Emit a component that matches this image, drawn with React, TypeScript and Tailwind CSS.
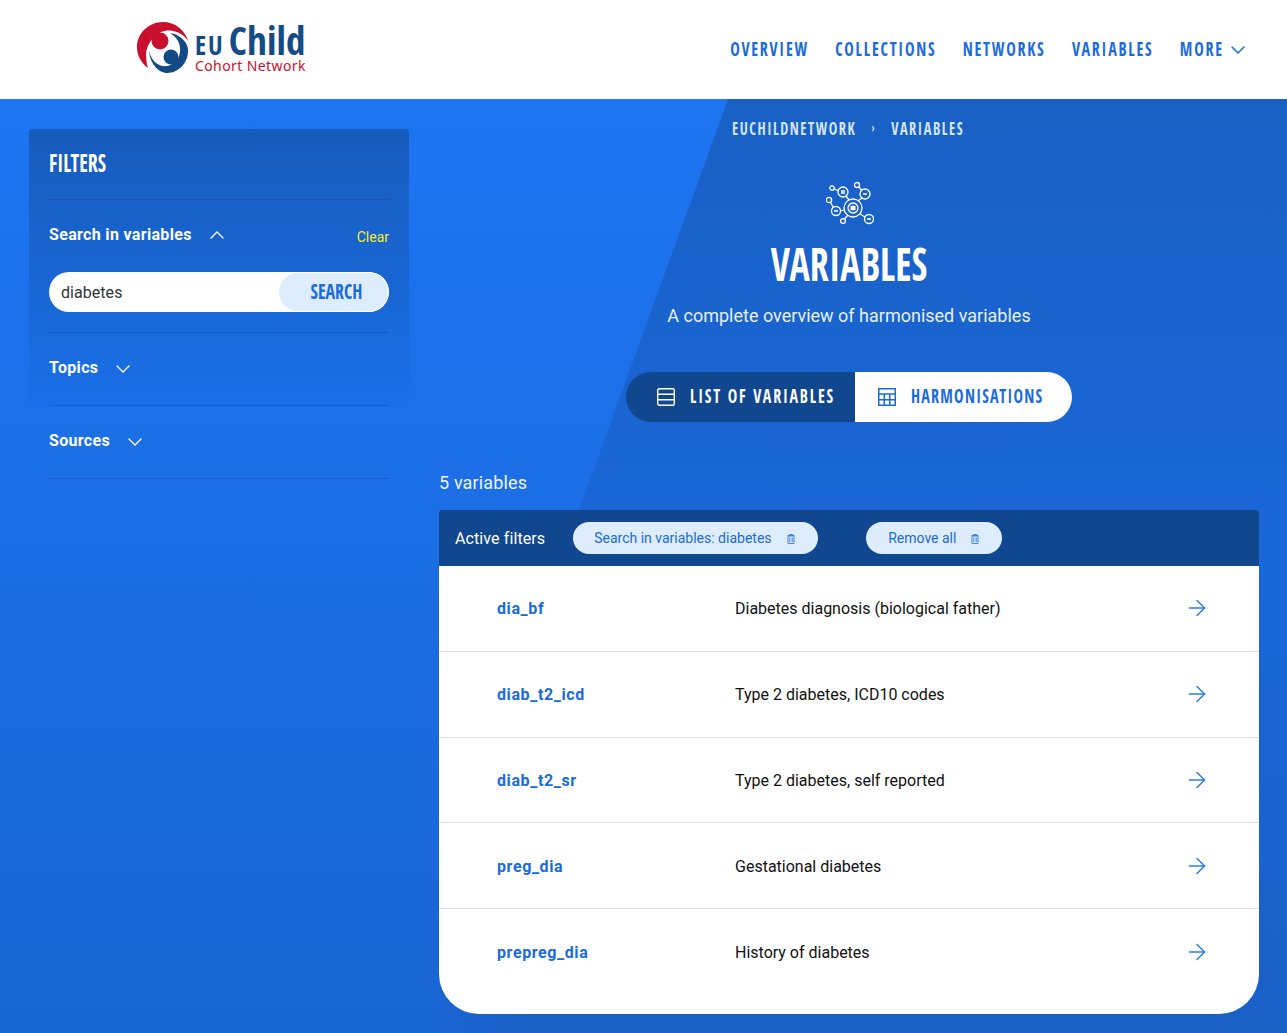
import React from 'react';
import { ArrowRight, ChevronDown, ChevronUp } from 'lucide-react';

const BODY = "font-['Roboto',sans-serif]";
const DISPLAY = "font-['Open_Sans_Condensed','Open_Sans',sans-serif]";

const NAV_ITEMS = ['OVERVIEW', 'COLLECTIONS', 'NETWORKS', 'VARIABLES', 'MORE'];

const ROWS = [
  { name: 'dia_bf', label: 'Diabetes diagnosis (biological father)', height: 'h-[86px]' },
  { name: 'diab_t2_icd', label: 'Type 2 diabetes, ICD10 codes', height: 'h-[86px]' },
  { name: 'diab_t2_sr', label: 'Type 2 diabetes, self reported', height: 'h-[85px] pt-[1px]' },
  { name: 'preg_dia', label: 'Gestational diabetes', height: 'h-[86px] pt-[2px]' },
  { name: 'prepreg_dia', label: 'History of diabetes', height: 'h-[105px] pb-[18px]' },
];

const Logo: React.FC = () => (
  <div className="flex items-center gap-[6px]">
    <svg width="53" height="52" viewBox="0 0 53 52" aria-label="EU Child logo" className="shrink-0">
      <path d="M11 46 C3 40 0 32 0 25 C0 11 12 0 26 0 C38 0 48 8 51 19 C47 13 42 10 36 9 C31 8 27 9 24 10 C16 14 10 22 9 32 C9 38 10 43 11 46 Z" fill="#c8102e" />
      <circle cx="23" cy="19" r="8.500" fill="#c8102e" />
      <path d="M12 29 C13 42 22 51 30 51 C42 51 52 40 51 27 C50 19 42 12 33 11 C40 15 44 22 43 30 C42 40 33 45 26 44 C19 43 14 37 12 29 Z" fill="#144a85" />
      <circle cx="34" cy="35" r="7.500" fill="#144a85" />
    </svg>
    <div className="flex flex-col">
      <div className={`${DISPLAY} flex items-baseline gap-[4px] h-[32px] ml-[-1px] font-bold text-[#144a85]`}>
        <span className="block text-[26px] leading-[32px] tracking-[2px]">EU</span>
        <span className="block text-[39px] leading-[32px] tracking-[0.200px]">Child</span>
      </div>
      <span className="block text-[14px] leading-[14px] tracking-[0.400px] text-[#c8102e] font-['Noto_Sans',sans-serif] mt-[3px] ml-[-1px] whitespace-nowrap">Cohort Network</span>
    </div>
  </div>
);

const NetworkIcon: React.FC = () => (
  <svg width="48" height="44" viewBox="0 0 48 44" fill="none" stroke="white" strokeWidth="1.300">
    <circle cx="27" cy="27" r="9" />
    <circle cx="27" cy="27" r="5" />
    <path d="M24.500 25.500h5M24.500 27h5M24.500 28.500h5" />
    <circle cx="17" cy="11" r="5" />
    <path d="M15 10h4M15 12h4" />
    <circle cx="6" cy="7" r="2.200" />
    <path d="M8 8l4 1.500M20 15l3 4" />
    <circle cx="39" cy="13" r="5" />
    <path d="M37 13h4M36 17l-4 3" />
    <circle cx="31" cy="4" r="2.500" />
    <path d="M33 6l3 3.500" />
    <circle cx="43" cy="38" r="4.500" />
    <path d="M41 38h4M34 33l5 3" />
    <circle cx="10" cy="30" r="4.500" />
    <path d="M8 30h4M14.500 30l3.500-1" />
    <circle cx="3" cy="19" r="2.600" />
    <path d="M4.500 21.500l3 5" />
    <circle cx="17" cy="40" r="2.400" />
    <path d="M18.500 38l3.500-4" />
  </svg>
);

const ListIcon: React.FC = () => (
  <svg width="18" height="18" viewBox="0 0 18 18" fill="none" stroke="currentColor" strokeWidth="1.400" className="shrink-0">
    <rect x="0.700" y="0.700" width="16.600" height="16.600" rx="1.500" />
    <path d="M1 6.300h16M1 11.700h16" />
  </svg>
);

const TableIcon: React.FC = () => (
  <svg width="18" height="18" viewBox="0 0 18 18" fill="none" stroke="currentColor" strokeWidth="1.500" className="shrink-0">
    <rect x="0.750" y="0.750" width="16.500" height="16.500" />
    <path d="M1 6h16M1 11.700h16M6.300 6v11M11.700 6v11" />
  </svg>
);

const TrashIcon: React.FC = () => (
  <svg width="8" height="10" viewBox="0 0 8 10" fill="none" stroke="#2f7be6" strokeWidth="0.900" className="shrink-0">
    <path d="M0.500 1.500h7M2.500 1.300V0.500h3v0.800" />
    <path d="M1 2h6v7.500H1z" />
    <path d="M2.800 3.500v4.500M5.200 3.500v4.500" />
  </svg>
);

const FilterSection: React.FC<{ title: string; open?: boolean; children?: React.ReactNode; action?: string; className: string }> = ({
  title,
  open,
  children,
  action,
  className,
}) => (
  <div className={`border-b border-[#0b2f6b]/25 ${className}`}>
    <div className="flex items-center gap-[13px] h-[20px]">
      <span className="text-[16px] leading-[20px] font-bold text-white tracking-[0.330px]">{title}</span>
      {open ? <ChevronUp size={24} className="text-white" strokeWidth={1.400} /> : <ChevronDown size={24} className="text-white mt-[2px]" strokeWidth={1.400} />}
      {action && <span className="ml-auto text-[14px] leading-[20px] text-[#f5f01e] mt-[4px]">{action}</span>}
    </div>
    {children}
  </div>
);

const App: React.FC = () => (
  <div className={`${BODY} w-full h-[1033px] overflow-hidden bg-white`}>
    <header className="h-[99px] flex items-center justify-between pl-[137px] pr-[37px]">
      <div className="mt-[-3px]">
        <Logo />
      </div>
      <div className="flex items-center gap-[2px] text-[#1a6bdc]">
        {/* the reference face is much narrower than anything installed */}
        <nav className={`${DISPLAY} flex items-center gap-[33px] text-[20px] font-bold tracking-[2.200px] scale-x-[0.8] origin-right mt-[-2px]`}>
          {NAV_ITEMS.map((item) => (
            <a key={item}>{item}</a>
          ))}
        </nav>
        <ChevronDown size={24} strokeWidth={1.500} />
      </div>
    </header>

    <main className="relative h-[934px] flex bg-gradient-to-b from-[#1d75f2] to-[#1965d3]">
      {/* darker diagonal shape behind the content */}
      <div className="absolute inset-0 bg-gradient-to-b from-[#1960c4] via-[#1a67d9] to-[#1a5fc4] [clip-path:polygon(728px_0,100%_0,100%_100%,440px_100%,440px_411px,579px_411px)]" />
      <div className="absolute bottom-0 left-[440px] w-[90px] h-[40px] bg-gradient-to-r from-[#1965d3] to-transparent" />

      <aside className="relative w-[439px] shrink-0 pt-[30px] pl-[29px] pr-[30px]">
        <div className="relative">
          <div className="absolute top-0 left-0 right-0 h-[276px] rounded-[4px] bg-gradient-to-b from-[#175bbb] to-[#1a6fe8]" />
          <div className="relative px-[20px]">
            <div className="border-b border-[#0b2f6b]/25 h-[71px] flex items-center">
              <span className={`${DISPLAY} text-[25px] font-bold text-white scale-x-[0.8] origin-left mt-[-3px]`}>FILTERS</span>
            </div>
            <FilterSection title="Search in variables" open action="Clear" className="h-[133px] pt-[25px]">
              <div className="mt-[27px] h-[40px] rounded-full bg-white flex items-center justify-between overflow-hidden">
                <span className="pl-[12px] pt-[1px] text-[16px] text-[#333] tracking-[0.050px]">diabetes</span>
                <button className="w-[111px] h-[40px] pl-[6px] rounded-full bg-[#deedfd] border border-white flex items-center justify-center">
                  <span className={`${DISPLAY} block text-[#1a6bdc] font-bold text-[21px] scale-x-[0.85]`}>SEARCH</span>
                </button>
              </div>
            </FilterSection>
            <FilterSection title="Topics" className="h-[73px] pt-[25px]" />
            <FilterSection title="Sources" className="h-[73px] pt-[25px]" />
          </div>
        </div>
      </aside>

      <section className="relative w-[820px] flex flex-col">
        <div className={`${DISPLAY} mt-[20px] ml-[293px] flex items-center h-[18px] text-[18px] font-bold tracking-[1.900px] text-[#d5e6fb] whitespace-nowrap scale-x-[0.8] origin-left`}>
          <span>EUCHILDNETWORK</span>
          <span className="mx-[19px] text-[12px] font-normal">›</span>
          <span>VARIABLES</span>
        </div>
        <div className="mt-[44px] flex justify-center h-[44px] pl-[2px]">
          <NetworkIcon />
        </div>
        <h1 className={`${DISPLAY} mt-[13px] text-center text-[47px] leading-[50px] font-bold text-white scale-x-[0.81]`}>VARIABLES</h1>
        <p className="mt-[16px] text-center text-[18px] leading-[24px] text-[#e6f0fd]">A complete overview of harmonised variables</p>

        <div className="mt-[44px] flex justify-center">
          <div className="flex h-[50px] whitespace-nowrap">
            <a className="w-[229px] pl-[31px] gap-[15px] flex items-center rounded-l-full bg-[#10478f] text-white">
              <ListIcon />
              <span className={`${DISPLAY} block mt-[-2px] text-[20px] font-bold tracking-[2.250px] scale-x-[0.8] origin-left`}>LIST OF VARIABLES</span>
            </a>
            <a className="w-[217px] pl-[23px] gap-[15px] flex items-center rounded-r-full bg-white text-[#1a6bdc]">
              <TableIcon />
              <span className={`${DISPLAY} block mt-[-2px] text-[20px] font-bold tracking-[1.550px] scale-x-[0.8] origin-left`}>HARMONISATIONS</span>
            </a>
          </div>
        </div>

        <div className="mt-[49px] text-[18px] leading-[24px] text-[#eef5fe] tracking-[0.150px]">5 variables</div>

        <div className="mt-[15px] h-[56px] rounded-t-[4px] bg-[#10478f] flex items-center pl-[16px]">
          <span className="mt-[1px] text-[16px] text-white tracking-[0.100px]">Active filters</span>
          <span className="ml-[28px] w-[245px] h-[32px] pl-[21px] pt-[1px] gap-[15px] rounded-full bg-[#deedfd] flex items-center text-[14px] text-[#1a6bdc]">
            Search in variables: diabetes
            <TrashIcon />
          </span>
          <span className="ml-[48px] w-[136px] h-[32px] pl-[22px] pt-[1px] gap-[15px] rounded-full bg-[#deedfd] flex items-center text-[14px] text-[#1a6bdc]">
            Remove all
            <TrashIcon />
          </span>
        </div>

        <div className="bg-white rounded-b-[40px]">
          {ROWS.map((row, i) => (
            <div key={row.name} className={`${row.height} flex items-center pl-[58px] pr-[49px] text-[16px] ${i < ROWS.length - 1 ? 'border-b border-[#dfdfdf]' : ''}`}>
              <a className="w-[238px] font-bold text-[#1a6bdc] tracking-[0.600px]">{row.name}</a>
              <span className="flex-1 text-[#111]">{row.label}</span>
              <ArrowRight size={26} strokeWidth={1.350} className="text-[#2f7be6] mb-[2px]" />
            </div>
          ))}
        </div>
      </section>
    </main>
  </div>
);

export default App;
